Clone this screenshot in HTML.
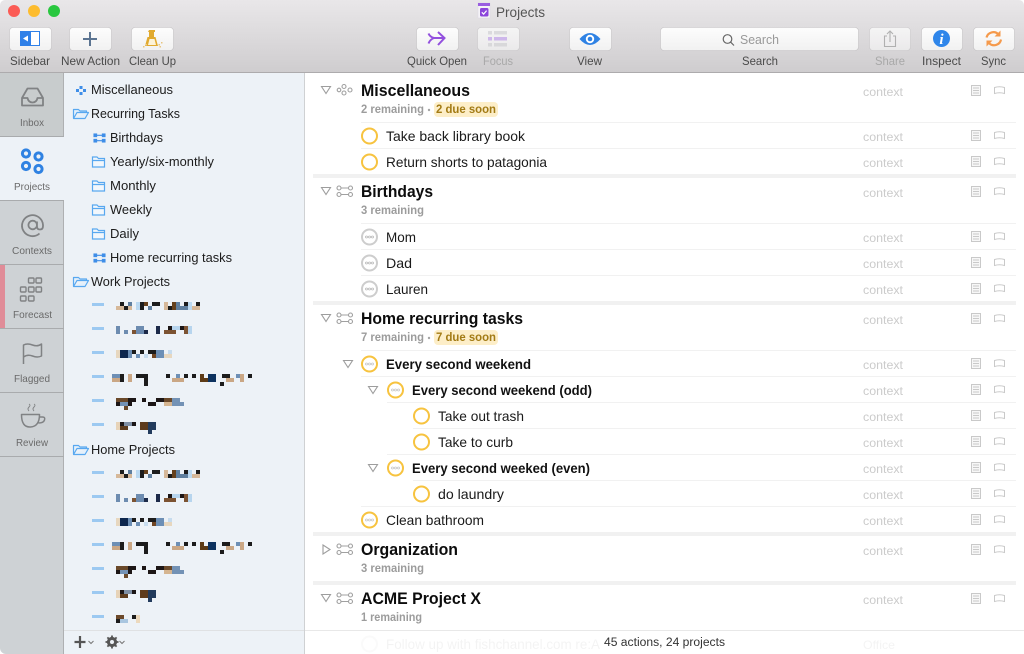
<!DOCTYPE html>
<html><head><meta charset="utf-8"><title>Projects</title>
<style>
html,body{margin:0;padding:0;background:#fff;width:1024px;height:654px;overflow:hidden}
svg{display:block}
text{font-family:"Liberation Sans",sans-serif}
.tb{font-size:12px;fill:#4a4a4a}
.tab{font-size:10.500px;fill:#6a6a6a}
.sb{font-size:13px;fill:#1c1c1c}
.h{font-size:16.500px;font-weight:bold;fill:#0c0c0c}
.s{font-size:12px;font-weight:bold;fill:#9c9c9c}
.d{font-size:12px;font-weight:bold;fill:#a37b14}
.r{font-size:14px;fill:#1a1a1a}
.b{font-size:14px;font-weight:bold;fill:#111}
.c{font-size:12px;fill:#cbcbcb}
</style></head><body>
<svg width="1024" height="654" viewBox="0 0 1024 654" xmlns="http://www.w3.org/2000/svg">
<defs>
<linearGradient id="tbg" x1="0" y1="0" x2="0" y2="1"><stop offset="0" stop-color="#e9e7e9"/><stop offset="1" stop-color="#cfcdcf"/></linearGradient>
<linearGradient id="btn" x1="0" y1="0" x2="0" y2="1"><stop offset="0" stop-color="#fdfdfd"/><stop offset="1" stop-color="#f1f1f1"/></linearGradient>
<filter id="bl" x="-5%" y="-20%" width="110%" height="140%"><feGaussianBlur stdDeviation="0.35"/></filter>
<clipPath id="win"><path d="M0 5a5 5 0 0 1 5-5h1014a5 5 0 0 1 5 5v649H6a6 6 0 0 1-6-6z"/></clipPath>
<g id="note" fill="none" stroke="#c9c9c9"><rect x="971.5" y="0.5" width="9" height="10" fill="#f7f7f7"/><path d="M973 3h6M973 5.500h6M973 8h6"/></g>
<path id="flag" fill="none" stroke="#c9c9c9" d="M994.500 2.500q5-1.500 10 0v6q-5-1.500-10 0z"/>
<circle id="ring" r="7.500" fill="none" stroke="#f7c33f" stroke-width="2"/>
<g id="gring"><circle r="7.500" fill="none" stroke="#f7c33f" stroke-width="2"/><g fill="none" stroke="#c6c6c6" stroke-width=".8"><circle cx="-3" r="1"/><circle r="1"/><circle cx="3" r="1"/></g></g>
<g id="grey"><circle r="7.500" fill="none" stroke="#cdcdcd" stroke-width="2"/><g fill="none" stroke="#b8b8b8" stroke-width=".8"><circle cx="-3" r="1"/><circle r="1"/><circle cx="3" r="1"/></g></g>
<g id="pi" fill="none" stroke="#a0a0a0" stroke-width="1.100"><circle cx="2.500" cy="-3" r="2"/><circle cx="14" cy="-3" r="2"/><circle cx="2.500" cy="3.500" r="2"/><circle cx="14" cy="3.500" r="2"/><path d="M4.500-3h7.500M4.500 3.500h7.500"/></g>
<path id="tri" fill="none" stroke="#9d9d9d" stroke-width="1.100" d="M-4.500-3.500h9L0 3.500z"/>
<path id="open" fill="#e4f0fb" stroke="#58a8f0" stroke-width="1.200" stroke-linejoin="round" d="M.5 10V1.500h5l1.500 1.500h6.500V5M.5 10.500h11.500l3.500-6H4z"/>
<g id="fold"><path fill="#f2f7fc" stroke="#58a8f0" stroke-width="1.200" d="M.5 11V1h4.500l1.500 1.500h6v8.500zM.5 4.500h12"/></g>
<g id="pj" fill="none" stroke="#3f8ee8" stroke-width="1.100"><rect x="0" y="0" width="2.600" height="2.600" fill="#3f8ee8"/><rect x="8.400" y="0" width="2.600" height="2.600" fill="#3f8ee8"/><rect x="0" y="5.400" width="2.600" height="2.600" fill="#3f8ee8"/><rect x="8.400" y="5.400" width="2.600" height="2.600" fill="#3f8ee8"/><path d="M2 1.300h7M2 6.700h7"/></g>
<rect id="dash" width="12" height="3" fill="#9cc9f1"/>
<g id="blobs" filter="url(#bl)" shape-rendering="crispEdges">
<g fill="#1d1a1c"><rect x="120" y="302" width="4" height="4"/><rect x="124" y="306" width="4" height="4"/><rect x="140" y="302" width="4" height="8"/><rect x="152" y="302" width="8" height="4"/><rect x="184" y="302" width="4" height="4"/><rect x="196" y="302" width="4" height="4"/><rect x="168" y="306" width="4" height="4"/></g>
<g fill="#d6b899"><rect x="116" y="306" width="8" height="4"/><rect x="128" y="306" width="4" height="4"/><rect x="164" y="302" width="4" height="8"/><rect x="192" y="306" width="8" height="4"/></g>
<g fill="#5f7f9f"><rect x="128" y="302" width="4" height="4"/><rect x="176" y="302" width="4" height="8"/><rect x="148" y="306" width="4" height="4"/><rect x="180" y="306" width="8" height="4"/></g>
<g fill="#bcd9f0"><rect x="136" y="302" width="4" height="8"/><rect x="188" y="302" width="4" height="8"/></g>
<g fill="#65401f"><rect x="172" y="302" width="4" height="8"/><rect x="144" y="302" width="4" height="4"/></g>
<g fill="#6d8cb0"><rect x="116" y="326" width="4" height="8"/><rect x="124" y="330" width="4" height="4"/><rect x="136" y="326" width="8" height="8"/></g>
<g fill="#1b2a4a"><rect x="156" y="326" width="4" height="8"/><rect x="144" y="330" width="4" height="4"/></g>
<g fill="#7c5333"><rect x="132" y="330" width="4" height="4"/><rect x="164" y="330" width="12" height="4"/><rect x="184" y="326" width="4" height="8"/></g>
<g fill="#1a1614"><rect x="168" y="326" width="4" height="4"/><rect x="180" y="326" width="4" height="4"/></g>
<g fill="#b7d5ee"><rect x="172" y="326" width="8" height="4"/><rect x="188" y="326" width="4" height="8"/></g>
<g fill="#e7d7bf"><rect x="116" y="350" width="4" height="8"/><rect x="164" y="354" width="8" height="4"/></g>
<g fill="#10284e"><rect x="120" y="350" width="8" height="8"/></g>
<g fill="#1a1a1a"><rect x="132" y="350" width="4" height="4"/><rect x="140" y="350" width="4" height="4"/><rect x="148" y="350" width="8" height="4"/></g>
<g fill="#6f4420"><rect x="152" y="354" width="4" height="4"/></g>
<g fill="#6d8fb5"><rect x="128" y="350" width="4" height="8"/><rect x="136" y="354" width="4" height="4"/><rect x="156" y="350" width="8" height="8"/></g>
<g fill="#c7dcee"><rect x="144" y="354" width="4" height="4"/><rect x="168" y="350" width="4" height="4"/></g>
<g fill="#6d8fb5"><rect x="112" y="374" width="8" height="4"/><rect x="176" y="374" width="4" height="4"/><rect x="236" y="374" width="4" height="4"/></g>
<g fill="#1a1a1a"><rect x="120" y="374" width="4" height="8"/><rect x="136" y="374" width="12" height="4"/><rect x="144" y="378" width="4" height="4"/><rect x="144" y="382" width="4" height="4"/><rect x="166" y="374" width="4" height="4"/><rect x="184" y="374" width="4" height="4"/><rect x="192" y="374" width="4" height="4"/><rect x="222" y="374" width="8" height="4"/><rect x="220" y="382" width="4" height="4"/><rect x="248" y="374" width="4" height="4"/></g>
<g fill="#caa785"><rect x="112" y="378" width="8" height="4"/><rect x="128" y="374" width="4" height="8"/><rect x="172" y="378" width="12" height="4"/><rect x="226" y="378" width="8" height="4"/><rect x="240" y="374" width="4" height="8"/></g>
<g fill="#5d3a18"><rect x="200" y="374" width="4" height="8"/><rect x="204" y="378" width="4" height="4"/></g>
<g fill="#11305e"><rect x="208" y="374" width="8" height="8"/></g>
<g fill="#6b4a2c"><rect x="116" y="398" width="12" height="4"/><rect x="164" y="398" width="8" height="4"/><rect x="124" y="406" width="4" height="4"/></g>
<g fill="#1a1717"><rect x="128" y="398" width="8" height="4"/><rect x="116" y="402" width="4" height="4"/><rect x="128" y="402" width="4" height="4"/><rect x="142" y="398" width="4" height="4"/><rect x="148" y="402" width="8" height="4"/><rect x="156" y="398" width="8" height="4"/></g>
<g fill="#d5b590"><rect x="164" y="402" width="8" height="4"/></g>
<g fill="#7392b5"><rect x="172" y="402" width="12" height="4"/><rect x="172" y="398" width="8" height="4"/><rect x="120" y="402" width="8" height="4"/></g>
<g fill="#e7d3b8"><rect x="116" y="422" width="4" height="8"/></g>
<g fill="#1a1818"><rect x="120" y="422" width="4" height="4"/><rect x="132" y="422" width="4" height="4"/></g>
<g fill="#5d3a1d"><rect x="120" y="426" width="8" height="4"/><rect x="140" y="422" width="8" height="8"/></g>
<g fill="#233a5c"><rect x="148" y="422" width="8" height="8"/><rect x="148" y="430" width="4" height="4"/></g>
<rect x="124" y="422" width="8" height="4" fill="#7e8ea3"/>
</g>
</defs>
<g clip-path="url(#win)">
<rect width="1024" height="654" fill="#fff"/>

<!-- toolbar -->
<rect width="1024" height="72" fill="url(#tbg)"/>
<rect y="72" width="1024" height="1" fill="#adabad"/>
<circle cx="14" cy="11" r="6" fill="#fb5b55"/><circle cx="34" cy="11" r="6" fill="#fdbc2e"/><circle cx="54" cy="11" r="6" fill="#29c73f"/>

<rect x="478" y="3" width="12" height="15" fill="#f5f3f7" stroke="#dcd6e4" stroke-width=".5"/>
<rect x="478" y="3" width="12" height="3" fill="#9a5ee0"/>
<rect x="480" y="8" width="8.500" height="8.500" rx="1.500" fill="#8c45db"/>
<path d="M481.800 12.300l1.800 1.800 3-3.500" fill="none" stroke="#fff" stroke-width="1.200"/>
<text x="496" y="17" font-size="13.500" fill="#555" textLength="49" lengthAdjust="spacingAndGlyphs">Projects</text>

<g fill="url(#btn)" stroke="#c4c2c4" stroke-width=".6">
<rect x="9.500" y="27.500" width="42" height="23" rx="3.500"/>
<rect x="69.500" y="27.500" width="42" height="23" rx="3.500"/>
<rect x="131.500" y="27.500" width="42" height="23" rx="3.500"/>
<rect x="416.500" y="27.500" width="42" height="23" rx="3.500"/>
<rect x="477.500" y="27.500" width="42" height="23" rx="3.500" opacity=".75"/>
<rect x="569.500" y="27.500" width="42" height="23" rx="3.500"/>
<rect x="660.500" y="27.500" width="198" height="23" rx="3.500"/>
<rect x="869.500" y="27.500" width="41" height="23" rx="3.500" opacity=".75"/>
<rect x="921.500" y="27.500" width="41" height="23" rx="3.500"/>
<rect x="973.500" y="27.500" width="41" height="23" rx="3.500"/>
</g>
<!-- sidebar icon -->
<rect x="20.500" y="31.500" width="19" height="14" fill="#fff" stroke="#2f80e8"/>
<rect x="20" y="31" width="11" height="15" fill="#2f80e8"/>
<path d="M28 35.500v6l-5-3z" fill="#fff"/>
<!-- plus -->
<path d="M90 32v14M83 39h14" stroke="#5b7491" stroke-width="2"/>
<!-- broom -->
<path d="M149 30h6v2h-1v5h1.500l2.500 9h-13l2.500-9h1.500v-5h-1z" fill="#e1aa2f"/>
<path d="M149.500 39h5l1.500 6h-8z" fill="#fdf3d8"/>
<g fill="#e8c680"><rect x="143" y="46" width="1.500" height="1.500"/><rect x="145.500" y="44" width="1.500" height="1.500"/><rect x="158.500" y="44" width="1.500" height="1.500"/><rect x="161" y="42" width="1.500" height="1.500"/><rect x="159.500" y="46" width="1.500" height="1.500"/></g>
<!-- quick open -->
<path d="M428.500 33.500q1.500 3.500 5.500 4.500h10.500M438 32l6.500 6-6.500 7M428.500 43.500q1.500-4 5.500-5.500" fill="none" stroke="#9350de" stroke-width="2"/>
<!-- focus -->
<g opacity=".55"><g fill="#c8c8cc"><rect x="488" y="31" width="4" height="3.500"/><rect x="488" y="43" width="4" height="3.500"/><rect x="494" y="31" width="13" height="3.500"/><rect x="494" y="43" width="13" height="3.500"/></g><g fill="#b28ae6"><rect x="488" y="37" width="4" height="3.500"/><rect x="494" y="37" width="13" height="3.500"/></g></g>
<!-- view -->
<path d="M579.500 39q10.500-12 21 0q-10.500 12-21 0z" fill="#2f82e4"/><circle cx="590" cy="39" r="4.200" fill="#fff"/><circle cx="590" cy="39" r="2.300" fill="#2f82e4"/>
<!-- search -->
<circle cx="727.500" cy="39" r="4.300" fill="none" stroke="#666" stroke-width="1.200"/><path d="M730.700 42.200l3.300 3.300" stroke="#666" stroke-width="1.200"/>
<text x="740" y="44" font-size="12.500" fill="#999" textLength="39" lengthAdjust="spacingAndGlyphs">Search</text>
<!-- share -->
<g fill="none" stroke="#b0b0b0" stroke-width="1.100"><path d="M887 36h-2.500v10.500h11V36H893M890 42V31.500M887 34l3-3 3 3"/></g>
<!-- inspect -->
<circle cx="941.500" cy="38.500" r="8.500" fill="#2f86ea"/><text x="941.500" y="44" text-anchor="middle" style="font-family:'Liberation Serif',serif;font-style:italic;font-weight:bold" font-size="15" fill="#fff">i</text>
<!-- sync -->
<path d="M986.500 37.500a7 7 0 0 1 12-3M1001 39.500a7 7 0 0 1-12 3.500" fill="none" stroke="#f59a4c" stroke-width="2.200"/><path d="M1000.500 30.500v6h-6zM986.500 46.500v-6h6z" fill="#f59a4c"/>

<g class="tb">
<text x="10" y="65" textLength="40" lengthAdjust="spacingAndGlyphs">Sidebar</text>
<text x="61" y="65" textLength="59" lengthAdjust="spacingAndGlyphs">New Action</text>
<text x="129" y="65" textLength="47" lengthAdjust="spacingAndGlyphs">Clean Up</text>
<text x="407" y="65" textLength="60" lengthAdjust="spacingAndGlyphs">Quick Open</text>
<text x="483" y="65" textLength="30" lengthAdjust="spacingAndGlyphs" style="fill:#a8a8a8">Focus</text>
<text x="577" y="65" textLength="25" lengthAdjust="spacingAndGlyphs">View</text>
<text x="742" y="65" textLength="36" lengthAdjust="spacingAndGlyphs">Search</text>
<text x="875" y="65" textLength="30" lengthAdjust="spacingAndGlyphs" style="fill:#a8a8a8">Share</text>
<text x="922" y="65" textLength="39" lengthAdjust="spacingAndGlyphs">Inspect</text>
<text x="981" y="65" textLength="25" lengthAdjust="spacingAndGlyphs">Sync</text>
</g>

<!-- tab rail -->
<rect y="73" width="64" height="581" fill="#ced2d5"/>
<rect x="63" y="73" width="1" height="581" fill="#aeb0b2"/>
<rect y="73" width="63" height="63" fill="#c8cccd"/>
<rect y="137" width="64" height="63" fill="#edf2f7"/>
<rect y="265" width="5" height="63" fill="#e08c98"/>
<g fill="#a9abad"><rect y="136" width="64" height="1"/><rect y="200" width="64" height="1"/><rect y="264" width="64" height="1"/><rect y="328" width="64" height="1"/><rect y="392" width="64" height="1"/><rect y="456" width="64" height="1"/></g>

<!-- tab icons -->
<g fill="none" stroke="#808284" stroke-width="1.800" stroke-linejoin="round">
<path d="M22 98v7.500h21V98l-5.500-9.500h-10zM22 98h5.500q1 4.500 5 4.500t5-4.500H43"/>
<path d="M39.500 233.500A10.500 10.500 0 1 1 43 225v1q0 3.500-3 3.500t-3-3v-5M37 225a4.300 4.300 0 1 1-8.600 0a4.300 4.300 0 1 1 8.600 0"/>
<path d="M23.500 364V345q4-2 9 0t9-1v12q-4 2-9 0t-9 1" stroke-width="1.500"/>
<path d="M21.500 414.500h18q0 12-9 12.500t-9-12.500zM39.500 417h3q3 0 2 3t-6 3" stroke-width="1.500"/>
<path d="M29 411q-2-2 0-4t0-3M34 411q-2-2 0-4t0-3" stroke-width=".9"/>
</g>
<g fill="none" stroke="#808284" stroke-width="1.400">
<rect x="28.500" y="278" width="5.500" height="5" rx="1"/><rect x="36" y="278" width="5.500" height="5" rx="1"/>
<rect x="20.500" y="287" width="5.500" height="5" rx="1"/><rect x="28.500" y="287" width="5.500" height="5" rx="1"/><rect x="36" y="287" width="5.500" height="5" rx="1"/>
<rect x="20.500" y="296" width="5.500" height="5" rx="1"/><rect x="28.500" y="296" width="5.500" height="5" rx="1"/>
</g>
<g fill="none" stroke="#2f82e2" stroke-width="3"><circle cx="26" cy="153.500" r="3.600"/><circle cx="38.500" cy="156.500" r="3.600"/><circle cx="26" cy="166" r="3.600"/><circle cx="38.500" cy="169" r="3.600"/></g>
<g class="tab">
<text x="20" y="126" textLength="24" lengthAdjust="spacingAndGlyphs">Inbox</text>
<text x="14" y="190" textLength="36" lengthAdjust="spacingAndGlyphs">Projects</text>
<text x="12" y="254" textLength="40" lengthAdjust="spacingAndGlyphs">Contexts</text>
<text x="13" y="318" textLength="39" lengthAdjust="spacingAndGlyphs">Forecast</text>
<text x="14" y="382" textLength="36" lengthAdjust="spacingAndGlyphs">Flagged</text>
<text x="16" y="446" textLength="32" lengthAdjust="spacingAndGlyphs">Review</text>
</g>

<!-- sidebar -->
<rect x="64" y="73" width="240" height="581" fill="#edf2f7"/>
<rect x="304" y="73" width="1" height="581" fill="#cfd1d3"/>
<g fill="#3f8ee8"><rect x="76" y="89" width="3" height="3"/><rect x="79.500" y="86" width="3" height="3"/><rect x="79.500" y="92" width="3" height="3"/><rect x="83" y="89" width="3" height="3"/></g>
<use href="#open" x="73" y="108"/><use href="#open" x="73" y="276"/><use href="#open" x="73" y="444"/>
<use href="#pj" x="94" y="134"/><use href="#pj" x="94" y="254"/>
<use href="#fold" x="92" y="156"/><use href="#fold" x="92" y="180"/><use href="#fold" x="92" y="204"/><use href="#fold" x="92" y="228"/>
<g class="sb">
<text x="91" y="94" textLength="82" lengthAdjust="spacingAndGlyphs">Miscellaneous</text>
<text x="91" y="118" textLength="89" lengthAdjust="spacingAndGlyphs">Recurring Tasks</text>
<text x="110" y="142" textLength="53" lengthAdjust="spacingAndGlyphs">Birthdays</text>
<text x="110" y="166" textLength="104" lengthAdjust="spacingAndGlyphs">Yearly/six-monthly</text>
<text x="110" y="190" textLength="46" lengthAdjust="spacingAndGlyphs">Monthly</text>
<text x="110" y="214" textLength="42" lengthAdjust="spacingAndGlyphs">Weekly</text>
<text x="110" y="238" textLength="29" lengthAdjust="spacingAndGlyphs">Daily</text>
<text x="110" y="262" textLength="122" lengthAdjust="spacingAndGlyphs">Home recurring tasks</text>
<text x="91" y="286" textLength="79" lengthAdjust="spacingAndGlyphs">Work Projects</text>
<text x="91" y="454" textLength="84" lengthAdjust="spacingAndGlyphs">Home Projects</text>
</g>
<use href="#dash" x="92" y="303"/><use href="#dash" x="92" y="327"/><use href="#dash" x="92" y="351"/><use href="#dash" x="92" y="375"/><use href="#dash" x="92" y="399"/><use href="#dash" x="92" y="423"/>
<use href="#dash" x="92" y="471"/><use href="#dash" x="92" y="495"/><use href="#dash" x="92" y="519"/><use href="#dash" x="92" y="543"/><use href="#dash" x="92" y="567"/><use href="#dash" x="92" y="591"/><use href="#dash" x="92" y="615"/>
<use href="#blobs"/><use href="#blobs" y="168"/>
<g filter="url(#bl)" shape-rendering="crispEdges"><rect x="116" y="615" width="8" height="4" fill="#6c4a2c"/><rect x="116" y="619" width="4" height="4" fill="#1a1a1a"/><rect x="120" y="619" width="8" height="4" fill="#a9c6e0"/><rect x="132" y="615" width="4" height="4" fill="#1a1a1a"/><rect x="136" y="615" width="4" height="8" fill="#ecd9bd"/></g>
<rect x="64" y="630" width="240" height="1" fill="#dfe1e3"/>
<path d="M80 636v12M74.500 642h11" stroke="#555" stroke-width="2.200"/>
<path d="M88.500 641l2.500 2.500 2.500-2.500M119.500 641l2.500 2.500 2.500-2.500" fill="none" stroke="#777"/>
<circle cx="112" cy="642" r="3.800" fill="none" stroke="#555" stroke-width="2.600"/>
<path d="M112 635.500v13M105.500 642h13M107.400 637.400l9.200 9.200M116.600 637.400l-9.200 9.200" stroke="#555" stroke-width="1.800"/>
<circle cx="112" cy="642" r="2" fill="#edf2f7"/>

<!-- main lines -->
<g fill="#f1f1f1">
<rect x="361" y="122" width="655" height="1"/><rect x="361" y="148" width="655" height="1"/>
<rect x="361" y="223" width="655" height="1"/><rect x="361" y="249" width="655" height="1"/><rect x="361" y="275" width="655" height="1"/>
<rect x="361" y="350" width="655" height="1"/><rect x="361" y="376" width="655" height="1"/><rect x="387" y="402" width="629" height="1"/><rect x="413" y="428" width="603" height="1"/><rect x="387" y="454" width="629" height="1"/><rect x="413" y="480" width="603" height="1"/><rect x="361" y="506" width="655" height="1"/>
<rect x="313" y="174" width="703" height="4"/><rect x="313" y="301" width="703" height="4"/><rect x="313" y="532" width="703" height="4"/><rect x="313" y="581" width="703" height="4"/>
</g>

<!-- disclosure -->
<use href="#tri" x="326" y="90"/><use href="#tri" x="326" y="191"/><use href="#tri" x="326" y="318"/><use href="#tri" x="326" y="598"/>
<use href="#tri" x="348" y="364"/><use href="#tri" x="373" y="390"/><use href="#tri" x="373" y="468"/>
<path d="M323 545l7 4.500-7 4.500z" fill="none" stroke="#9d9d9d" stroke-width="1.100"/>

<!-- project icons -->
<g fill="none" stroke="#a0a0a0" stroke-width="1.100"><circle cx="339" cy="90" r="1.800"/><circle cx="344" cy="86.500" r="2"/><circle cx="344" cy="93" r="2"/><circle cx="350" cy="90" r="2"/></g>
<use href="#pi" x="336.500" y="191"/><use href="#pi" x="336.500" y="318"/><use href="#pi" x="336.500" y="549"/><use href="#pi" x="336.500" y="598"/>

<!-- titles -->
<g class="h">
<text x="361" y="96" textLength="109" lengthAdjust="spacingAndGlyphs">Miscellaneous</text>
<text x="361" y="197" textLength="72" lengthAdjust="spacingAndGlyphs">Birthdays</text>
<text x="361" y="324" textLength="162" lengthAdjust="spacingAndGlyphs">Home recurring tasks</text>
<text x="361" y="555" textLength="97" lengthAdjust="spacingAndGlyphs">Organization</text>
<text x="361" y="604" textLength="120" lengthAdjust="spacingAndGlyphs">ACME Project X</text>
</g>
<g class="s">
<text x="361" y="113" textLength="63" lengthAdjust="spacingAndGlyphs">2 remaining</text>
<text x="361" y="214" textLength="63" lengthAdjust="spacingAndGlyphs">3 remaining</text>
<text x="361" y="341" textLength="63" lengthAdjust="spacingAndGlyphs">7 remaining</text>
<text x="361" y="572" textLength="63" lengthAdjust="spacingAndGlyphs">3 remaining</text>
<text x="361" y="621" textLength="61" lengthAdjust="spacingAndGlyphs">1 remaining</text>
</g>
<circle cx="429" cy="110" r="1.200" fill="#a5a5a5"/><circle cx="429" cy="338" r="1.200" fill="#a5a5a5"/>
<rect x="434" y="102" width="64" height="15" rx="4" fill="#fdeec8"/><rect x="434" y="330" width="64" height="15" rx="4" fill="#fdeec8"/>
<g class="d">
<text x="436" y="113" textLength="60" lengthAdjust="spacingAndGlyphs">2 due soon</text>
<text x="436" y="341" textLength="60" lengthAdjust="spacingAndGlyphs">7 due soon</text>
</g>

<!-- rows -->
<use href="#ring" x="369.500" y="136"/><use href="#ring" x="369.500" y="162"/>
<use href="#grey" x="369.500" y="237"/><use href="#grey" x="369.500" y="263"/><use href="#grey" x="369.500" y="289"/>
<use href="#gring" x="369.500" y="364"/><use href="#gring" x="395.500" y="390"/><use href="#ring" x="421.500" y="416"/><use href="#ring" x="421.500" y="442"/><use href="#gring" x="395.500" y="468"/><use href="#ring" x="421.500" y="494"/><use href="#gring" x="369.500" y="520"/>
<g class="r">
<text x="386" y="141" textLength="139" lengthAdjust="spacingAndGlyphs">Take back library book</text>
<text x="386" y="167" textLength="161" lengthAdjust="spacingAndGlyphs">Return shorts to patagonia</text>
<text x="386" y="242" textLength="30" lengthAdjust="spacingAndGlyphs">Mom</text>
<text x="386" y="268" textLength="26" lengthAdjust="spacingAndGlyphs">Dad</text>
<text x="386" y="294" textLength="42" lengthAdjust="spacingAndGlyphs">Lauren</text>
<text x="438" y="421" textLength="86" lengthAdjust="spacingAndGlyphs">Take out trash</text>
<text x="438" y="447" textLength="75" lengthAdjust="spacingAndGlyphs">Take to curb</text>
<text x="438" y="499" textLength="66" lengthAdjust="spacingAndGlyphs">do laundry</text>
<text x="386" y="525" textLength="98" lengthAdjust="spacingAndGlyphs">Clean bathroom</text>
</g>
<g class="b">
<text x="386" y="369" textLength="145" lengthAdjust="spacingAndGlyphs">Every second weekend</text>
<text x="412" y="395" textLength="180" lengthAdjust="spacingAndGlyphs">Every second weekend (odd)</text>
<text x="412" y="473" textLength="178" lengthAdjust="spacingAndGlyphs">Every second weeked (even)</text>
</g>

<!-- context -->
<g class="c">
<text x="863" y="96" textLength="40" lengthAdjust="spacingAndGlyphs">context</text>
<text x="863" y="141" textLength="40" lengthAdjust="spacingAndGlyphs">context</text>
<text x="863" y="167" textLength="40" lengthAdjust="spacingAndGlyphs">context</text>
<text x="863" y="197" textLength="40" lengthAdjust="spacingAndGlyphs">context</text>
<text x="863" y="242" textLength="40" lengthAdjust="spacingAndGlyphs">context</text>
<text x="863" y="268" textLength="40" lengthAdjust="spacingAndGlyphs">context</text>
<text x="863" y="294" textLength="40" lengthAdjust="spacingAndGlyphs">context</text>
<text x="863" y="324" textLength="40" lengthAdjust="spacingAndGlyphs">context</text>
<text x="863" y="369" textLength="40" lengthAdjust="spacingAndGlyphs">context</text>
<text x="863" y="395" textLength="40" lengthAdjust="spacingAndGlyphs">context</text>
<text x="863" y="421" textLength="40" lengthAdjust="spacingAndGlyphs">context</text>
<text x="863" y="447" textLength="40" lengthAdjust="spacingAndGlyphs">context</text>
<text x="863" y="473" textLength="40" lengthAdjust="spacingAndGlyphs">context</text>
<text x="863" y="499" textLength="40" lengthAdjust="spacingAndGlyphs">context</text>
<text x="863" y="525" textLength="40" lengthAdjust="spacingAndGlyphs">context</text>
<text x="863" y="555" textLength="40" lengthAdjust="spacingAndGlyphs">context</text>
<text x="863" y="604" textLength="40" lengthAdjust="spacingAndGlyphs">context</text>
</g>
<use href="#note" y="85"/><use href="#flag" y="85"/>
<use href="#note" y="130"/><use href="#flag" y="130"/>
<use href="#note" y="156"/><use href="#flag" y="156"/>
<use href="#note" y="186"/><use href="#flag" y="186"/>
<use href="#note" y="231"/><use href="#flag" y="231"/>
<use href="#note" y="257"/><use href="#flag" y="257"/>
<use href="#note" y="283"/><use href="#flag" y="283"/>
<use href="#note" y="313"/><use href="#flag" y="313"/>
<use href="#note" y="358"/><use href="#flag" y="358"/>
<use href="#note" y="384"/><use href="#flag" y="384"/>
<use href="#note" y="410"/><use href="#flag" y="410"/>
<use href="#note" y="436"/><use href="#flag" y="436"/>
<use href="#note" y="462"/><use href="#flag" y="462"/>
<use href="#note" y="488"/><use href="#flag" y="488"/>
<use href="#note" y="514"/><use href="#flag" y="514"/>
<use href="#note" y="544"/><use href="#flag" y="544"/>
<use href="#note" y="593"/><use href="#flag" y="593"/>

<!-- status bar -->
<rect x="305" y="630" width="719" height="24" fill="#fff"/>
<rect x="305" y="630" width="719" height="1" fill="#e8e8e8"/>
<g opacity=".05">
<circle cx="369.500" cy="644" r="7.500" fill="none" stroke="#999" stroke-width="2"/>
<text x="386" y="649" font-size="14" fill="#333" textLength="214" lengthAdjust="spacingAndGlyphs">Follow up with fishchannel.com re:A</text>
<text x="863" y="649" font-size="12" fill="#333" textLength="32" lengthAdjust="spacingAndGlyphs">Office</text>
</g>
<text x="604" y="646" font-size="11.500" fill="#333" textLength="121" lengthAdjust="spacingAndGlyphs">45 actions, 24 projects</text>
</g>
</svg>
</body></html>
